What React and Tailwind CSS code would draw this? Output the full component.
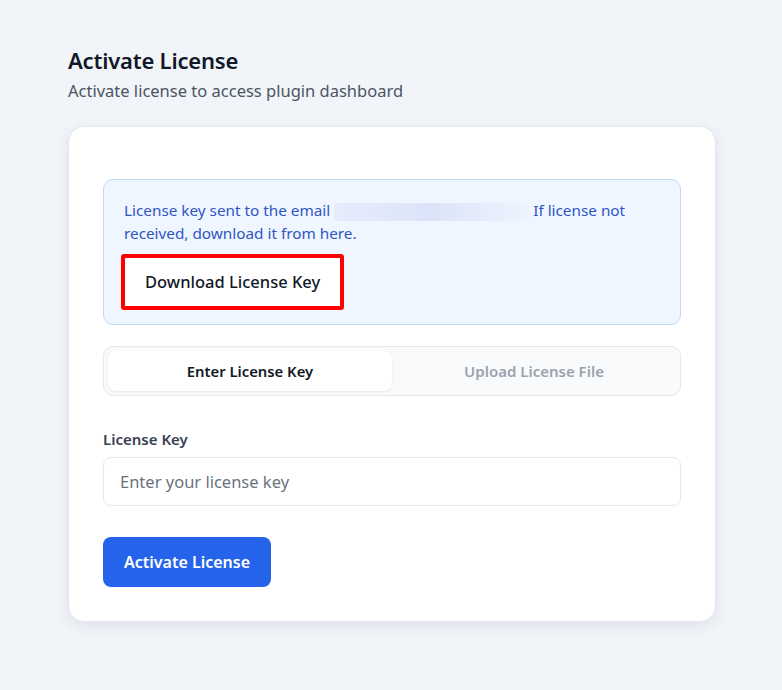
export default function App() {
  const font = { fontFamily: '"Noto Sans", "Open Sans", sans-serif' };
  return (
    <div className="min-h-[690px] w-full bg-[#f1f4f9] pt-[45px] pl-[68px] pr-[66px]" style={font}>
      <h1 className="text-[22px] leading-[30px] font-semibold text-[#111827] tracking-[-0.2px]">Activate License</h1>
      <p className="text-[16.5px] leading-[26px] text-[#4b5563] mt-[3px]">Activate license to access plugin dashboard</p>
      <div className="mt-[22px] w-[648px] rounded-[16px] bg-white shadow-[0_4px_16px_rgba(15,23,42,0.08)] border border-[#e5e7eb] px-[34px] pt-[52px] pb-[34px]">
        <div className="rounded-[10px] border border-[#c7d7f3] bg-[#eff6ff] px-[20px] pt-[19px] pb-[14px]">
          <p className="text-[15.3px] leading-[23px] text-[#2f55c4]">
            License key sent to the email{" "}
            <span className="inline-block align-middle w-[195px] h-[18px] rounded-[3px] bg-gradient-to-r from-[#e6ecfb] via-[#dbe4f9] to-[#eef3fd]"></span>{" "}
            If license not received, download it from here.
          </p>
          <div className="mt-[9px] ml-[-3px] w-fit border-[4px] border-[#ff0000] rounded-[3px]">
            <button className="block bg-white px-[20px] h-[48px] text-[16.5px] font-medium text-[#111827]">Download License Key</button>
          </div>
        </div>
        <div className="mt-[21px] flex rounded-[10px] border border-[#e5e7eb] bg-[#f8fafc] p-[4px]">
          <div className="flex-1 h-[40px] flex items-center justify-center rounded-[8px] bg-white shadow-[0_1px_3px_rgba(0,0,0,0.08)] text-[14.8px] font-semibold text-[#111827]">Enter License Key</div>
          <div className="flex-1 h-[40px] flex items-center justify-center text-[15px] font-semibold text-[#9ca3af]">Upload License File</div>
        </div>
        <label className="block mt-[33px] text-[15px] font-semibold text-[#374151] leading-[20px]">License Key</label>
        <input
          className="mt-[8px] w-full h-[49px] rounded-[8px] border border-[#e5e7eb] px-[16px] text-[16.5px] text-[#111827] placeholder:text-[#6b7280] outline-none"
          placeholder="Enter your license key"
        />
        <button className="block mt-[31px] h-[50px] px-[21px] rounded-[8px] bg-[#2563eb] text-white text-[16px] font-semibold">Activate License</button>
      </div>
    </div>
  );
}
